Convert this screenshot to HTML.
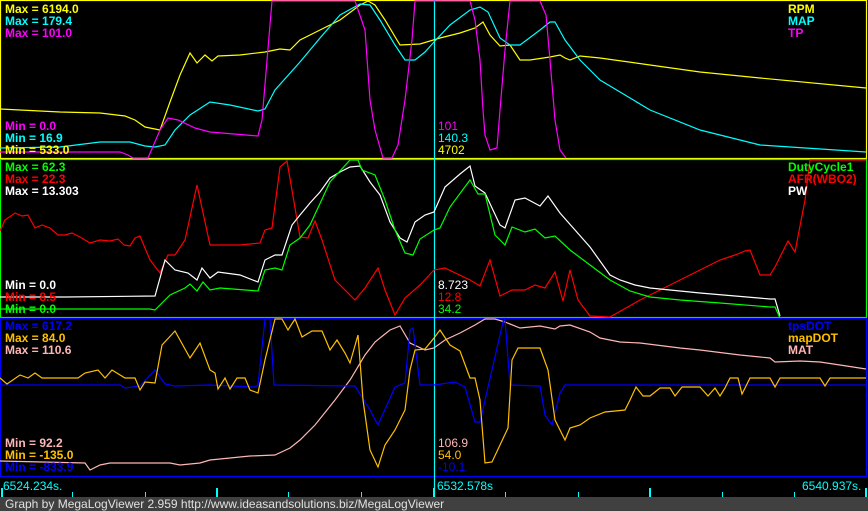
<!DOCTYPE html><html><head><style>
body{margin:0;background:#000;width:868px;height:511px;overflow:hidden;position:relative;font-family:"Liberation Sans",Arial,sans-serif}
svg{position:absolute;left:0;top:0}
.t{position:absolute;font-size:12px;line-height:12px;white-space:nowrap}
.b{font-weight:bold}
</style></head><body>
<svg width="868" height="511" fill="none" stroke-width="1.2">
<rect x="0" y="497" width="868" height="14" fill="#404040" stroke="none"/>
<rect x="0.5" y="0.5" width="866" height="158" stroke="#ff0"/>
<rect x="0.5" y="159.5" width="866" height="158" stroke="#0f0"/>
<rect x="0.5" y="318.5" width="866" height="158" stroke="#00f"/>
<line x1="434.5" y1="0" x2="434.5" y2="497" stroke="#0ff"/>
<g stroke="#0ff" stroke-width="2">
<line x1="2" y1="488" x2="2" y2="497"/><line x1="217" y1="488" x2="217" y2="497"/><line x1="434" y1="488" x2="434" y2="497"/><line x1="650" y1="488" x2="650" y2="497"/><line x1="866" y1="488" x2="866" y2="497"/>
</g>
<g stroke="#0ff" stroke-width="1">
<line x1="72.5" y1="492" x2="72.5" y2="497"/><line x1="145.5" y1="492" x2="145.5" y2="497"/><line x1="288.5" y1="492" x2="288.5" y2="497"/><line x1="361.5" y1="492" x2="361.5" y2="497"/><line x1="505.5" y1="492" x2="505.5" y2="497"/><line x1="578.5" y1="492" x2="578.5" y2="497"/><line x1="722.5" y1="492" x2="722.5" y2="497"/><line x1="794.5" y1="492" x2="794.5" y2="497"/>
</g>
<polyline stroke="#ff0" points="0,109 40,111 60,112 100,113 125,116 135,120 145,127 160,130 170,102 180,75 190,53 197,63 205,55 212,61 218,56 240,55 265,52 280,49 290,50 300,40 320,30 340,20 360,5 368,1 375,5 385,20 400,45 420,44 440,38 460,33 475,28 483,22 490,35 500,46 510,45 520,60 530,60 550,57 560,55 565,58 570,60 580,56 600,58 650,65 700,72 760,78 866,88"/>
<polyline stroke="#0ff" points="0,148 60,147 100,142 130,142 145,146 155,147 165,145 175,130 190,115 210,102 230,105 258,111 265,109 275,90 300,62 320,38 340,15 360,4 370,5 380,20 395,45 405,60 415,60 425,52 434,42 450,25 470,10 480,7 488,12 500,38 510,45 520,45 540,30 550,22 555,22 565,40 580,60 600,80 650,110 700,130 760,145 866,152"/>
<polyline stroke="#f0f" points="0,152 120,152 128,155 133,158 148,158 160,130 168,118 178,120 195,128 210,132 258,136 262,120 272,1 355,1 365,30 370,100 375,130 383,158 392,158 398,145 405,100 412,40 415,1 470,1 475,20 480,60 483,110 485,135 490,150 497,148 500,110 505,50 510,1 540,1 546,15 550,60 555,120 560,150 566,158"/>
<polyline stroke="#f00" points="0,231 5,220 15,213 22,216 28,215 35,228 42,225 50,228 58,235 65,235 72,233 80,237 90,243 100,240 110,241 118,239 124,245 130,246 135,238 140,236 150,260 160,273 168,255 175,255 185,240 197,185 210,245 240,245 260,243 265,230 272,228 280,167 287,161 300,237 308,238 315,221 322,240 335,280 355,300 365,288 378,268 385,290 395,315 405,298 420,285 434,270 445,268 470,280 480,286 490,260 500,296 512,290 525,290 535,285 545,288 555,272 563,301 570,270 578,300 590,316 610,317 640,300 660,290 680,280 700,270 720,260 735,255 745,251 750,250 760,275 770,275 775,267 788,241 795,252 805,200 810,160 866,160"/>
<polyline stroke="#fff" points="0,297 65,297 155,296 165,260 175,270 188,273 197,280 202,268 210,278 218,272 240,275 258,282 265,260 275,255 282,255 292,225 300,215 310,203 320,192 330,178 340,172 350,167 360,166 370,182 380,195 390,222 400,238 407,242 415,222 425,215 434,212 445,187 460,174 470,166 475,186 485,193 500,225 505,228 515,200 525,198 540,206 548,196 560,213 575,230 590,247 610,275 620,280 635,285 650,288 670,290 700,293 770,299 775,299 780,316"/>
<polyline stroke="#0f0" points="0,309 150,309 155,310 170,295 185,288 190,284 197,291 203,282 210,290 220,288 258,291 265,270 275,268 282,270 290,245 300,238 310,225 330,182 350,160 358,160 362,170 375,175 385,200 395,230 405,253 413,255 420,239 434,230 440,228 450,207 470,180 478,194 485,194 495,235 505,245 512,227 525,232 535,229 545,238 555,236 570,250 590,265 610,280 630,291 650,297 680,300 720,303 770,307 775,307 780,318"/>
<polyline stroke="#ffb6b6" points="0,461 85,463 90,470 100,465 110,463 170,463 180,465 200,463 210,460 250,456 275,455 290,448 300,440 315,425 335,400 350,380 365,355 375,342 390,330 400,326 410,343 425,350 434,348 445,340 460,333 475,325 485,319 495,319 505,322 520,328 540,326 555,329 560,326 570,325 590,332 600,338 620,342 640,343 680,348 700,350 740,355 760,357 770,358 775,362 800,361 820,362 840,365 866,369"/>
<polyline stroke="#0000ff" points="0,385 120,385 125,388 140,386 155,370 165,384 175,386 210,385 255,387 258,385 265,319 270,319 274,385 355,386 370,410 378,425 395,387 405,383 410,330 413,328 420,385 434,385 455,382 465,387 475,422 480,422 503,322 505,319 510,385 540,386 545,415 552,425 560,393 565,385 866,385"/>
<polyline stroke="#ffc000" points="0,378 7,384 20,375 28,378 35,373 42,378 60,378 78,378 85,373 98,370 105,378 112,370 125,378 135,378 140,390 145,382 155,383 162,345 175,331 190,358 200,343 210,370 215,373 218,389 225,378 230,389 237,378 245,378 250,390 258,393 265,360 275,319 282,319 288,330 295,319 302,337 312,331 322,331 330,350 337,340 345,353 350,363 358,335 363,400 370,450 378,467 385,445 395,430 405,410 410,370 415,350 425,349 434,338 440,330 450,345 460,351 470,378 475,378 480,400 485,463 492,462 500,445 508,428 512,360 518,348 540,348 548,370 555,420 565,440 570,428 580,425 590,418 605,412 625,410 630,400 636,387 643,396 650,396 660,388 670,388 675,396 682,387 700,387 708,396 715,388 720,396 725,388 730,378 738,378 742,394 750,378 770,378 775,387 780,378 820,378 825,386 830,378 866,378"/>
</svg>
<div class="t b" style="left:5px;top:3px;color:#ff0">Max = 6194.0</div>
<div class="t b" style="left:5px;top:15px;color:#0ff">Max = 179.4</div>
<div class="t b" style="left:5px;top:27px;color:#f0f">Max = 101.0</div>
<div class="t b" style="left:5px;top:120px;color:#f0f">Min = 0.0</div>
<div class="t b" style="left:5px;top:132px;color:#0ff">Min = 16.9</div>
<div class="t b" style="left:5px;top:144px;color:#ff0">Min = 533.0</div>
<div class="t" style="left:438px;top:120px;color:#f0f">101</div>
<div class="t" style="left:438px;top:132px;color:#0ff">140.3</div>
<div class="t" style="left:438px;top:144px;color:#ff0">4702</div>
<div class="t b" style="left:788px;top:3px;color:#ff0">RPM</div>
<div class="t b" style="left:788px;top:15px;color:#0ff">MAP</div>
<div class="t b" style="left:788px;top:27px;color:#f0f">TP</div>
<div class="t b" style="left:5px;top:161px;color:#0f0">Max = 62.3</div>
<div class="t b" style="left:5px;top:173px;color:#f00">Max = 22.3</div>
<div class="t b" style="left:5px;top:185px;color:#fff">Max = 13.303</div>
<div class="t b" style="left:5px;top:279px;color:#fff">Min = 0.0</div>
<div class="t b" style="left:5px;top:291px;color:#f00">Min = 8.5</div>
<div class="t b" style="left:5px;top:303px;color:#0f0">Min = 0.0</div>
<div class="t" style="left:438px;top:279px;color:#fff">8.723</div>
<div class="t" style="left:438px;top:291px;color:#f00">12.8</div>
<div class="t" style="left:438px;top:303px;color:#0f0">34.2</div>
<div class="t b" style="left:788px;top:161px;color:#0f0">DutyCycle1</div>
<div class="t b" style="left:788px;top:173px;color:#f00">AFR(WBO2)</div>
<div class="t b" style="left:788px;top:185px;color:#fff">PW</div>
<div class="t b" style="left:5px;top:320px;color:#00f">Max = 617.2</div>
<div class="t b" style="left:5px;top:332px;color:#ffc000">Max = 84.0</div>
<div class="t b" style="left:5px;top:344px;color:#ffb6b6">Max = 110.6</div>
<div class="t b" style="left:5px;top:437px;color:#ffb6b6">Min = 92.2</div>
<div class="t b" style="left:5px;top:449px;color:#ffc000">Min = -135.0</div>
<div class="t b" style="left:5px;top:461px;color:#00f">Min = -833.9</div>
<div class="t" style="left:438px;top:437px;color:#ffb6b6">106.9</div>
<div class="t" style="left:438px;top:449px;color:#ffc000">54.0</div>
<div class="t" style="left:438px;top:461px;color:#00f">-10.1</div>
<div class="t b" style="left:788px;top:320px;color:#00f">tpsDOT</div>
<div class="t b" style="left:788px;top:332px;color:#ffc000">mapDOT</div>
<div class="t b" style="left:788px;top:344px;color:#ffb6b6">MAT</div>
<div class="t" style="left:3px;top:480px;color:#0ff">6524.234s.</div>
<div class="t" style="left:437px;top:480px;color:#0ff">6532.578s</div>
<div class="t" style="left:802px;top:480px;color:#0ff">6540.937s.</div>
<div class="t" style="left:5px;top:498px;color:#e0e0e0">Graph by MegaLogViewer 2.959 http://www.ideasandsolutions.biz/MegaLogViewer</div>
</body></html>
